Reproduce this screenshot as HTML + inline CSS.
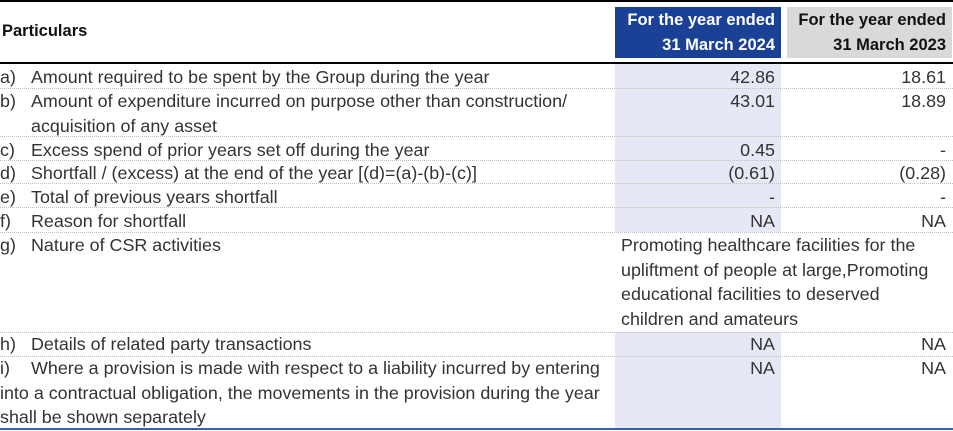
<!DOCTYPE html>
<html><head><meta charset="utf-8"><style>
*{margin:0;padding:0;box-sizing:border-box}
body{width:953px;height:431px;background:#fff;position:relative;overflow:hidden;font-family:"Liberation Sans",Arial,sans-serif;color:#333;font-size:17.9px}
.a{position:absolute}
.l{position:absolute;left:0;width:953px;border-top:1px dotted #c0c0c0;height:0}
.r{position:absolute;line-height:24.5px;white-space:nowrap;margin-top:1px}
.lab{left:0;width:610px}
.lab span.k{display:inline-block;width:31px}
.c1{left:615px;width:160px;text-align:right}
.c2{left:787px;width:159px;text-align:right}
.hd{font-weight:bold;font-size:16.5px;line-height:25px;text-align:right;padding-right:6px;white-space:nowrap}
</style></head><body>
<div class="a" style="left:0;top:0;width:953px;height:2px;background:#000"></div>
<div class="a" style="left:615px;top:64px;width:166px;height:168px;background:#e6e8f5"></div>
<div class="a" style="left:615px;top:332px;width:166px;height:96px;background:#e6e8f5"></div>
<div class="a hd" style="left:615px;top:7px;width:166px;height:51px;background:#1a4196;color:#fff;padding-top:1px">For the year ended<br>31 March 2024</div>
<div class="a hd" style="left:787px;top:7px;width:165px;height:51px;background:#d9d9d9;color:#111;padding-top:1px">For the year ended<br>31 March 2023</div>
<div class="a" style="left:2px;top:22px;font-weight:bold;font-size:16.5px;color:#111">Particulars</div>
<div class="a" style="left:0;top:62px;width:953px;height:2px;background:#000"></div>

<div class="l" style="top:88px"></div>
<div class="l" style="top:136px"></div>
<div class="l" style="top:160px"></div>
<div class="l" style="top:183px"></div>
<div class="l" style="top:207px"></div>
<div class="l" style="top:232px"></div>
<div class="l" style="top:332px"></div>
<div class="l" style="top:356px"></div>
<div class="a" style="left:0;top:428px;width:953px;height:2px;background:#3a5fa8"></div>

<div class="r lab" style="top:64px"><span class="k">a)</span>Amount required to be spent by the Group during the year</div>
<div class="r c1" style="top:64px">42.86</div><div class="r c2" style="top:64px">18.61</div>
<div class="r lab" style="top:88px"><span class="k">b)</span>Amount of expenditure incurred on purpose other than construction/<br><span class="k"></span>acquisition of any asset</div>
<div class="r c1" style="top:88px">43.01</div><div class="r c2" style="top:88px">18.89</div>
<div class="r lab" style="top:137px"><span class="k">c)</span>Excess spend of prior years set off during the year</div>
<div class="r c1" style="top:137px">0.45</div><div class="r c2" style="top:137px">-</div>
<div class="r lab" style="top:160px"><span class="k">d)</span>Shortfall / (excess) at the end of the year [(d)=(a)-(b)-(c)]</div>
<div class="r c1" style="top:160px">(0.61)</div><div class="r c2" style="top:160px">(0.28)</div>
<div class="r lab" style="top:184px"><span class="k">e)</span>Total of previous years shortfall</div>
<div class="r c1" style="top:184px">-</div><div class="r c2" style="top:184px">-</div>
<div class="r lab" style="top:208px"><span class="k">f)</span>Reason for shortfall</div>
<div class="r c1" style="top:208px">NA</div><div class="r c2" style="top:208px">NA</div>
<div class="r lab" style="top:232px"><span class="k">g)</span>Nature of CSR activities</div>
<div class="r" style="top:232px;left:621px;width:330px;line-height:24.7px">Promoting healthcare facilities for the<br>upliftment of people at large,Promoting<br>educational facilities to deserved<br>children and amateurs</div>
<div class="r lab" style="top:331px"><span class="k">h)</span>Details of related party transactions</div>
<div class="r c1" style="top:331px">NA</div><div class="r c2" style="top:331px">NA</div>
<div class="r lab" style="top:355px"><span class="k">i)</span>Where a provision is made with respect to a liability incurred by entering<br>into a contractual obligation, the movements in the provision during the year<br>shall be shown separately</div>
<div class="r c1" style="top:355px">NA</div><div class="r c2" style="top:355px">NA</div>
</body></html>
